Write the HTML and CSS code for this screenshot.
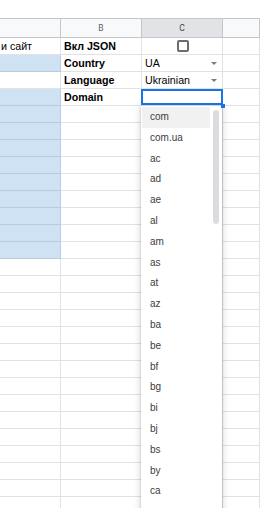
FILE: index.html
```html
<!DOCTYPE html>
<html lang="uk">
<head>
  <meta charset="UTF-8" />
  <meta name="viewport" content="width=device-width, initial-scale=1.0" />
  <title>Таблиця</title>
  <link rel="stylesheet" href="styles.css">
</head>
<body>

  <div class="sheet">
    <div class="topbar"></div>

    <div class="row head">
      <div class="cell"></div>
      <div class="cell">B</div>
      <div class="cell active">C</div>
      <div class="cell"></div>
    </div>

    <div class="row">
      <div class="cell">и сайт</div>
      <div class="cell label">Вкл JSON</div>
      <div class="cell center"><span class="checkbox"></span></div>
      <div class="cell"></div>
    </div>
    <div class="row">
      <div class="cell blue"></div>
      <div class="cell label">Country</div>
      <div class="cell select">UA<span class="arrow"></span></div>
      <div class="cell"></div>
    </div>
    <div class="row">
      <div class="cell"></div>
      <div class="cell label">Language</div>
      <div class="cell select">Ukrainian<span class="arrow"></span></div>
      <div class="cell"></div>
    </div>
    <div class="row">
      <div class="cell blue"></div>
      <div class="cell label">Domain</div>
      <div class="cell current"><span class="handle"></span></div>
      <div class="cell"></div>
    </div>

    <div class="row"><div class="cell blue"></div><div class="cell"></div><div class="cell"></div><div class="cell"></div></div>
    <div class="row"><div class="cell blue"></div><div class="cell"></div><div class="cell"></div><div class="cell"></div></div>
    <div class="row"><div class="cell blue"></div><div class="cell"></div><div class="cell"></div><div class="cell"></div></div>
    <div class="row"><div class="cell blue"></div><div class="cell"></div><div class="cell"></div><div class="cell"></div></div>
    <div class="row"><div class="cell blue"></div><div class="cell"></div><div class="cell"></div><div class="cell"></div></div>
    <div class="row"><div class="cell blue"></div><div class="cell"></div><div class="cell"></div><div class="cell"></div></div>
    <div class="row"><div class="cell blue"></div><div class="cell"></div><div class="cell"></div><div class="cell"></div></div>
    <div class="row"><div class="cell blue"></div><div class="cell"></div><div class="cell"></div><div class="cell"></div></div>
    <div class="row"><div class="cell blue"></div><div class="cell"></div><div class="cell"></div><div class="cell"></div></div>
    <div class="row"><div class="cell"></div><div class="cell"></div><div class="cell"></div><div class="cell"></div></div>
    <div class="row"><div class="cell"></div><div class="cell"></div><div class="cell"></div><div class="cell"></div></div>
    <div class="row"><div class="cell"></div><div class="cell"></div><div class="cell"></div><div class="cell"></div></div>
    <div class="row"><div class="cell"></div><div class="cell"></div><div class="cell"></div><div class="cell"></div></div>
    <div class="row"><div class="cell"></div><div class="cell"></div><div class="cell"></div><div class="cell"></div></div>
    <div class="row"><div class="cell"></div><div class="cell"></div><div class="cell"></div><div class="cell"></div></div>
    <div class="row"><div class="cell"></div><div class="cell"></div><div class="cell"></div><div class="cell"></div></div>
    <div class="row"><div class="cell"></div><div class="cell"></div><div class="cell"></div><div class="cell"></div></div>
    <div class="row"><div class="cell"></div><div class="cell"></div><div class="cell"></div><div class="cell"></div></div>
    <div class="row"><div class="cell"></div><div class="cell"></div><div class="cell"></div><div class="cell"></div></div>
    <div class="row"><div class="cell"></div><div class="cell"></div><div class="cell"></div><div class="cell"></div></div>
    <div class="row"><div class="cell"></div><div class="cell"></div><div class="cell"></div><div class="cell"></div></div>
    <div class="row"><div class="cell"></div><div class="cell"></div><div class="cell"></div><div class="cell"></div></div>
    <div class="row"><div class="cell"></div><div class="cell"></div><div class="cell"></div><div class="cell"></div></div>
    <div class="row"><div class="cell"></div><div class="cell"></div><div class="cell"></div><div class="cell"></div></div>

    <!-- список доменів для Domain -->
    <div class="dropdown">
      <ul class="options">
        <li class="hover">com</li>
        <li>com.ua</li>
        <li>ac</li>
        <li>ad</li>
        <li>ae</li>
        <li>al</li>
        <li>am</li>
        <li>as</li>
        <li>at</li>
        <li>az</li>
        <li>ba</li>
        <li>be</li>
        <li>bf</li>
        <li>bg</li>
        <li>bi</li>
        <li>bj</li>
        <li>bs</li>
        <li>by</li>
        <li>ca</li>
      </ul>
      <div class="track"><div class="thumb"></div></div>
    </div>
  </div>

</body>
</html>
```

FILE: styles.css
```css
body {
  margin: 0;
  background: white;
  overflow: hidden;
  font-family: 'Liberation Sans', Arial, sans-serif;
}

.sheet {
  position: relative;
}

.topbar {
  height: 18px;
  border-bottom: 1px solid #c4c7c5;
}

.row {
  display: grid;
  grid-template-columns: 61px 81px 81px 1fr;
}

.cell {
  box-sizing: border-box;
  height: 17px;
  border-right: 1px solid #e2e2e2;
  border-bottom: 1px solid #e2e2e2;
  padding-left: 3px;
  font-size: 10.67px;
  line-height: 16px;
  color: #000;
  white-space: nowrap;
}

.row .cell:first-child {
  padding-left: 1px;
}

.head .cell {
  height: 19px;
  background: #f8f9fa;
  border-right-color: #c4c7c5;
  border-bottom-color: #c4c7c5;
  padding: 0;
  text-align: center;
  font-family: Roboto, 'Liberation Sans', sans-serif;
  font-size: 8.5px;
  line-height: 18px;
  color: #5f6368;
}

.head .cell.active {
  background: #e1e3e6;
  color: #444746;
}

.cell.blue {
  background: #cfe2f3;
  border-right-color: #bccfe0;
  border-bottom-color: #b8cbdc;
}

.label {
  font-weight: bold;
}

.center {
  display: flex;
  justify-content: center;
  align-items: center;
}

.checkbox {
  box-sizing: border-box;
  width: 12px;
  height: 12px;
  border: 2px solid #6d6d6d;
  border-radius: 2px;
  margin-left: -2px;
}

.select {
  display: flex;
  justify-content: space-between;
  align-items: center;
  padding-right: 5px;
}

.arrow {
  width: 0;
  height: 0;
  border-left: 3px solid transparent;
  border-right: 3px solid transparent;
  border-top: 3px solid #7a7a7a;
  margin-top: 1px;
}

.current {
  position: relative;
}

.current::after {
  content: "";
  position: absolute;
  top: 0;
  left: -1px;
  right: -1px;
  bottom: 0;
  border: 2px solid #1a73e8;
}

.handle {
  position: absolute;
  right: -3px;
  bottom: -3px;
  width: 4px;
  height: 4px;
  background: #1a73e8;
  z-index: 3;
}

.dropdown {
  position: absolute;
  top: 106px;
  left: 141px;
  width: 81px;
  height: 420px;
  background: white;
  display: flex;
  padding: 1px 0 0 1px;
  box-sizing: border-box;
  box-shadow: 0 1px 2px rgba(60,64,67,0.3), 0 2px 6px 2px rgba(60,64,67,0.15);
  z-index: 2;
}

.options {
  list-style: none;
  margin: 0;
  padding: 0;
  width: 68px;
}

.options li {
  height: 20.8px;
  line-height: 20.8px;
  padding-left: 8px;
  font-size: 10px;
  color: #3c4043;
}

.options li.hover {
  background: #f1f1f1;
}

.track {
  padding: 3px 0 0 3px;
}

.thumb {
  width: 6px;
  height: 114px;
  border-radius: 3px;
  background: #dadce0;
}
```
